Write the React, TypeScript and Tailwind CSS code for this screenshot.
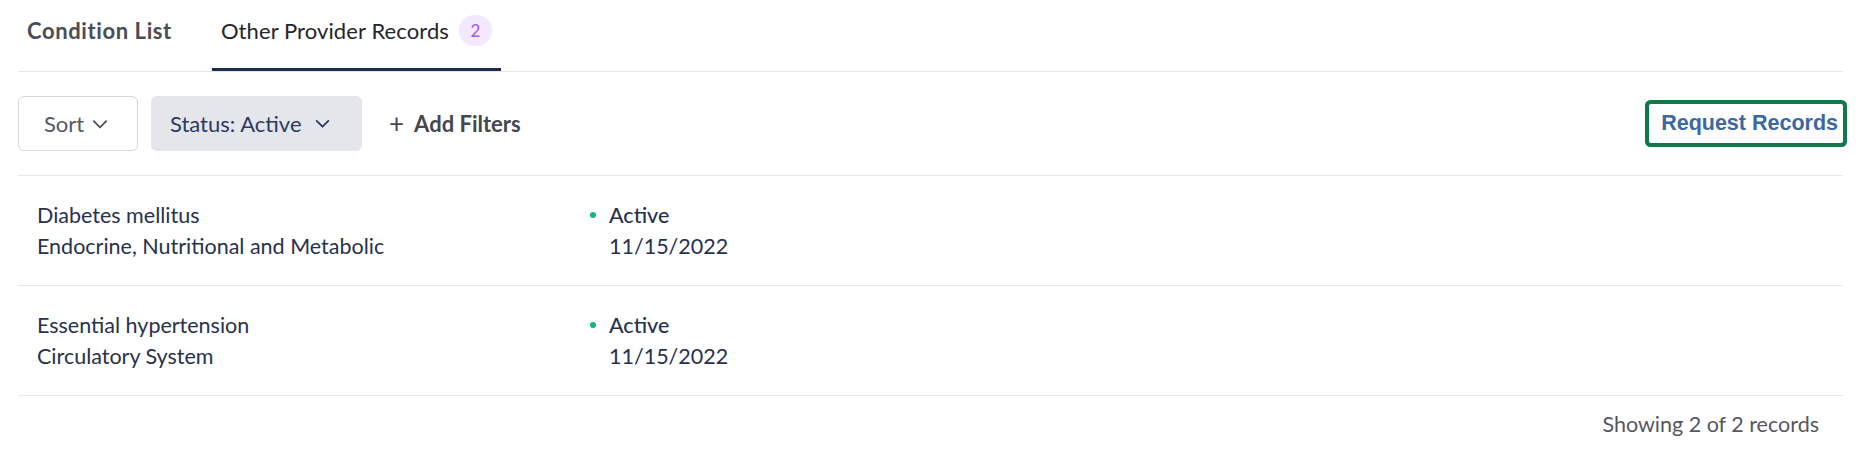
import React from "react";

function Chevron({ className = "" }: { className?: string }) {
  return (
    <svg viewBox="0 0 16 16" className={className} fill="none" stroke="currentColor" strokeWidth={1.7} strokeLinecap="round" strokeLinejoin="round">
      <path d="M2.5 5.5 L8 11 L13.5 5.5" />
    </svg>
  );
}

function Row({ name, category }: { name: string; category: string }) {
  return (
    <div className="flex items-center h-[110px] border-b border-[#e6e7ea] pl-[19px] text-[21.5px] leading-[31px] text-[#27324f]">
      <div className="w-[553px] flex flex-col">
        <span>{name}</span>
        <span>{category}</span>
      </div>
      <div className="flex flex-col">
        <div className="flex items-center">
          <span className="w-[6px] h-[6px] rounded-full bg-[#12b77a] mr-[13px]" />
          <span className="font-medium">Active</span>
        </div>
        <span className="pl-[19px]">11/15/2022</span>
      </div>
    </div>
  );
}

export default function App() {
  return (
    <div className="w-[1865px] h-[469px] bg-white pl-[18px] pr-[22px] font-['Lato','Noto_Sans',sans-serif]">
      <div className="flex h-[72px] border-b border-[#e4e6ea]">
        <div className="px-[9px] pt-[16px] text-[22px] leading-[30px] font-bold tracking-[0.6px] text-[#4a4d55]">Condition List</div>
        <div className="ml-[31px] px-[9px] pt-[16px] border-b-[3px] border-[#1d2b4c] flex items-start text-[22px] leading-[30px] text-[#24262b]">
          <span className="tracking-[0.1px]">Other Provider Records</span>
          <span className="ml-[10px] w-[33px] h-[31px] -mt-[1px] rounded-full bg-[#f3e8fd] text-[#a455f0] text-[17px] flex items-center justify-center">2</span>
        </div>
      </div>
      <div className="flex items-center h-[104px] border-b border-[#e6e7ea]">
        <button className="h-[55px] w-[120px] border border-[#d5d7dc] rounded-[6px] flex items-center justify-start pl-[25px] gap-[7px] text-[22px] text-[#55585f]">
          <span>Sort</span>
          <Chevron className="w-[18px] h-[18px] text-[#55585f]" />
        </button>
        <button className="ml-[13px] h-[55px] w-[211px] rounded-[6px] bg-[#e4e6eb] flex items-center justify-start pl-[19px] gap-[12px] text-[22px] text-[#2b3a5e]">
          <span>Status: Active</span>
          <Chevron className="w-[17px] h-[17px] text-[#2b3a5e]" />
        </button>
        <button className="ml-[27px] flex items-center gap-[10px] text-[22px] font-bold text-[#44474d]">
          <span className="text-[26px] font-normal leading-none -mt-[2px]">+</span>
          <span>Add Filters</span>
        </button>
        <div className="flex-1" />
        <button className="h-[39px] pl-[12px] pr-[5px] ring-[4px] ring-[#10794c] rounded-[2px] font-['Liberation_Sans',sans-serif] font-bold text-[21.5px] text-[#3b67a3]">
          Request Records
        </button>
      </div>
      <Row name="Diabetes mellitus" category="Endocrine, Nutritional and Metabolic" />
      <Row name="Essential hypertension" category="Circulatory System" />
      <div className="flex justify-end pr-[24px] pt-[16px] text-[21.5px] leading-[24px] text-[#55585f]">
        Showing 2 of 2 records
      </div>
    </div>
  );
}
